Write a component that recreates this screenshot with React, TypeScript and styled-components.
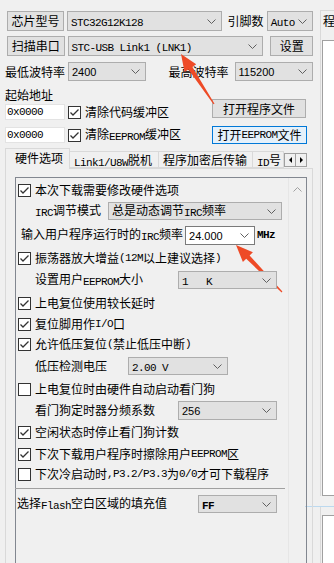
import React from 'react';
import styled, { createGlobalStyle } from 'styled-components';

const GlobalStyle = createGlobalStyle`
  html, body {
    margin: 0;
    padding: 0;
    background: #f0f0f0;
  }

  body {
    font-family: "Noto Sans CJK SC", "Liberation Sans", sans-serif;
    font-size: 12px;
    color: #000;
  }
`;

const $FACE = '#f0f0f0';
const $BTN = '#e1e1e1';
const $BTN_BORDER = '#adadad';
const $TAB_BORDER = '#d9d9d9';
const $BOX_BORDER = '#828790';
const $ARROW = '#ee4a26';

const Page = styled.div`
  position: relative;
  width: 334px;
  height: 563px;
  overflow: hidden;
  background: ${$FACE};
  display: flex;
  flex-direction: column;
`;

const MenuEdge = styled.div`
  height: 4px;
  background: #fff;
`;

const Body = styled.div`
  flex: 1;
  display: flex;
`;

const LeftCol = styled.div`
  width: 313px;
  display: flex;
  flex-direction: column;
`;

const Row = styled.div<{ $mt: number; $h: number; $pl?: number }>`
  display: flex;
  align-items: center;
  margin-top: ${p => p.$mt}px;
  height: ${p => p.$h}px;
  padding-left: ${p => p.$pl ?? 7}px;
  line-height: 14px;
  white-space: nowrap;
`;

// SimSun-like latin: 6px per glyph at 12px
const Lat = styled.span<{ $bold?: boolean }>`
  font-family: "Liberation Mono", monospace;
  font-size: 11px;
  letter-spacing: -0.6px;
  vertical-align: -1px;
  font-weight: ${p => (p.$bold ? 700 : 400)};
  white-space: pre;
`;

const Num = styled.span`
  font-family: "Liberation Sans", sans-serif;
  font-size: 11px;
`;

const mix = (text: string) =>
  text
    .split(/([\x20-\x7e]+)/)
    .filter(Boolean)
    .map((part, i) =>
      /^[\x20-\x7e]+$/.test(part) ? <Lat key={i}>{part}</Lat> : <React.Fragment key={i}>{part}</React.Fragment>
    );

const Button = styled.div<{ $w: number; $h?: number; $ml?: number; $mt?: number; $focus?: boolean }>`
  box-sizing: border-box;
  width: ${p => p.$w}px;
  height: ${p => p.$h ?? 20}px;
  margin-left: ${p => p.$ml ?? 0}px;
  margin-top: ${p => p.$mt ?? 0}px;
  display: flex;
  align-items: center;
  justify-content: center;
  background: ${p => (p.$focus ? '#e5f1fb' : $BTN)};
  border: 1px solid ${p => (p.$focus ? '#0078d7' : $BTN_BORDER)};
  line-height: 14px;
  white-space: nowrap;
`;

const SelectBox = styled.div<{ $w: number; $h?: number; $ml?: number; $white?: boolean }>`
  box-sizing: border-box;
  width: ${p => p.$w}px;
  height: ${p => p.$h ?? 20}px;
  margin-left: ${p => p.$ml ?? 0}px;
  padding: 0 5px 0 3px;
  display: flex;
  align-items: center;
  justify-content: space-between;
  background: ${p => (p.$white ? '#fff' : $BTN)};
  border: 1px solid ${p => (p.$white ? '#7a7a7a' : $BTN_BORDER)};
  line-height: 14px;
  white-space: nowrap;
  overflow: hidden;
`;

const Chevron = () => (
  <svg width="9" height="5" viewBox="0 0 9 5">
    <polyline points="0.5,0.5 4.5,4.5 8.5,0.5" fill="none" stroke="#606060" strokeWidth="1" />
  </svg>
);

const Select: React.FC<{ w: number; h?: number; ml?: number; white?: boolean; children: React.ReactNode }> = ({
  w,
  h,
  ml,
  white,
  children
}) => (
  <SelectBox $w={w} $h={h} $ml={ml} $white={white}>
    <span>{children}</span>
    <Chevron />
  </SelectBox>
);

const Label = styled.span<{ $w?: number; $ml?: number }>`
  display: inline-block;
  width: ${p => (p.$w ? `${p.$w}px` : 'auto')};
  margin-left: ${p => p.$ml ?? 0}px;
  flex-shrink: 0;
`;

const CheckBox = styled.span`
  box-sizing: border-box;
  width: 13px;
  height: 13px;
  flex-shrink: 0;
  background: #fff;
  border: 1px solid #333;
  display: flex;
  align-items: center;
  justify-content: center;
  margin-right: 4px;
`;

const Check: React.FC<{ on: boolean }> = ({ on }) => (
  <CheckBox>
    {on && (
      <svg width="11" height="11" viewBox="0 0 11 11">
        <polyline points="1.5,5.5 4,8 9.5,2.5" fill="none" stroke="#333" strokeWidth="1.3" />
      </svg>
    )}
  </CheckBox>
);

const TextInput = styled.div`
  box-sizing: border-box;
  width: 60px;
  height: 16px;
  background: #fff;
  border: 1px solid #e3e3e3;
  padding-left: 1px;
  display: flex;
  align-items: center;
  margin-right: 3px;
`;

const AddrBlock = styled.div`
  display: flex;
  margin-top: 5px;
`;

const AddrLeft = styled.div`
  width: 207px;
  padding-left: 5px;
  display: flex;
  flex-direction: column;
`;

const AddrTitle = styled.div`
  height: 18px;
  line-height: 18px;
`;

const AddrRight = styled.div`
  display: flex;
  flex-direction: column;
`;

const TabBar = styled.div`
  display: flex;
  align-items: flex-end;
  height: 20px;
  margin-top: 4px;
  padding-left: 5px;
  white-space: nowrap;
`;

const Tab = styled.div<{ $w: number; $active?: boolean }>`
  box-sizing: border-box;
  position: relative;
  z-index: ${p => (p.$active ? 2 : 1)};
  width: ${p => p.$w}px;
  height: ${p => (p.$active ? 21 : 17)}px;
  margin-left: -1px;
  margin-bottom: ${p => (p.$active ? -1 : 0)}px;
  padding-left: ${p => (p.$active ? 9 : 4)}px;
  padding-top: ${p => (p.$active ? 2 : 1)}px;
  background: ${$FACE};
  border: 1px solid ${$TAB_BORDER};
  border-bottom: ${p => (p.$active ? 'none' : `1px solid ${$TAB_BORDER}`)};
  line-height: 14px;
  overflow: hidden;
  &:first-child {
    margin-left: 0;
  }
`;

const Spin = styled.div`
  display: flex;
  align-self: center;
  margin-top: 4px;
`;

const SpinBtn = styled.div<{ $dir: 'left' | 'right' }>`
  box-sizing: border-box;
  width: 12px;
  height: 14px;
  background: ${$FACE};
  border: 1px solid #a0a0a0;
  margin-left: ${p => (p.$dir === 'right' ? -1 : 0)}px;
  display: flex;
  align-items: center;
  justify-content: center;
  &::after {
    content: '';
    border-top: 3px solid transparent;
    border-bottom: 3px solid transparent;
    ${p => (p.$dir === 'left' ? 'border-right: 3px solid #000;' : 'border-left: 3px solid #000;')}
  }
`;

const TabPanel = styled.div`
  position: relative;
  z-index: 1;
  flex: 1;
  margin-left: 5px;
  width: 308px;
  box-sizing: border-box;
  border: 1px solid ${$TAB_BORDER};
  border-bottom: none;
  padding: 8px 0 0 9px;
`;

const ListBox = styled.div`
  box-sizing: border-box;
  width: 292px;
  height: 420px;
  border: 1px solid ${$BOX_BORDER};
  border-bottom: none;
  display: flex;
`;

const ListContent = styled.div`
  flex: 1;
  padding-top: 2px;
  display: flex;
  flex-direction: column;
`;

const OptRow = styled.div<{ $h: number; $pl?: number }>`
  display: flex;
  align-items: center;
  height: ${p => p.$h}px;
  padding-left: ${p => p.$pl ?? 2}px;
  line-height: 14px;
  white-space: nowrap;
`;

const Separator = styled.div`
  height: 1px;
  margin: 4px 3px 0 -1px;
  background: #a0a0a0;
`;

const ScrollBar = styled.div`
  width: 18px;
  box-sizing: border-box;
  border-left: 1px solid #e6e6e6;
  display: flex;
  justify-content: center;
  padding-top: 9px;
`;

const Unit = styled(Lat)`
  font-weight: 700;
  margin-left: 2px;
`;

const RightCol = styled.div`
  flex: 1;
  display: flex;
  flex-direction: column;
  padding-top: 10px;
`;

const RightTab = styled.div`
  height: 21px;
  margin-left: 7px;
  padding-left: 2px;
  border-left: 1px solid ${$TAB_BORDER};
  border-top: 1px solid ${$TAB_BORDER};
  line-height: 20px;
  white-space: nowrap;
  overflow: hidden;
`;

const RightPanel = styled.div`
  margin-left: 7px;
  padding: 8px 0 0 1px;
  border-left: 1px solid ${$TAB_BORDER};
`;

const WhiteBox = styled.div<{ $h: number }>`
  height: ${p => p.$h}px;
  background: #fff;
  border: 1px solid #a0a0a0;
  border-right: none;
`;

const BlueLine = styled.div`
  height: 1px;
  margin: 10px 0 0 -8px;
  background: #bcd9ef;
`;

const Overlay = styled.svg`
  position: absolute;
  left: 0;
  top: 0;
  pointer-events: none;
`;

const arrowPoints = (tx: number, ty: number, fx: number, fy: number) => {
  const dx = tx - fx;
  const dy = ty - fy;
  const len = Math.hypot(dx, dy);
  const ux = dx / len;
  const uy = dy / len;
  const px = -uy;
  const py = ux;
  const hl = 17;
  const hw = 7;
  const sw = 2.4;
  const tw = 0.6;
  const bx = tx - ux * hl;
  const by = ty - uy * hl;
  return [
    [fx + px * tw, fy + py * tw],
    [bx + px * sw, by + py * sw],
    [bx + px * hw, by + py * hw],
    [tx, ty],
    [bx - px * hw, by - py * hw],
    [bx - px * sw, by - py * sw],
    [fx - px * tw, fy - py * tw]
  ]
    .map(pt => pt.map(v => v.toFixed(1)).join(','))
    .join(' ');
};

const App: React.FC = () => (
  <Page>
    <GlobalStyle />
    <MenuEdge />
    <Body>
      <LeftCol>
        <Row $mt={11} $h={20}>
          <Button $w={58}>芯片型号</Button>
          <Select w={157} ml={3}><Lat>STC32G12K128</Lat></Select>
          <Label $ml={6}>引脚数</Label>
          <Select w={47} ml={3}><Lat>Auto</Lat></Select>
        </Row>
        <Row $mt={5} $h={20}>
          <Button $w={58}>扫描串口</Button>
          <Select w={197} ml={3}><Lat>STC-USB Link1 (LNK1)</Lat></Select>
          <Button $w={43} $ml={7}>设置</Button>
        </Row>
        <Row $mt={6} $h={19} $pl={5}>
          <Label $w={63}>最低波特率</Label>
          <Select w={79} h={19}><Num>2400</Num></Select>
          <Label $w={66} $ml={23}>最高波特率</Label>
          <Select w={80} h={19}><Num>115200</Num></Select>
        </Row>
        <AddrBlock>
          <AddrLeft>
            <AddrTitle>起始地址</AddrTitle>
            <Row $mt={0} $h={16} $pl={0}>
              <TextInput><Lat>0x0000</Lat></TextInput>
              <Check on />
              <span>清除代码缓冲区</span>
            </Row>
            <Row $mt={7} $h={16} $pl={0}>
              <TextInput><Lat>0x0000</Lat></TextInput>
              <Check on />
              <span>{mix('清除EEPROM缓冲区')}</span>
            </Row>
          </AddrLeft>
          <AddrRight>
            <Button $w={94} $h={19} $mt={13}>打开程序文件</Button>
            <Button $w={95} $h={18} $mt={8} $focus>{mix('打开EEPROM文件')}</Button>
          </AddrRight>
        </AddrBlock>
        <TabBar>
          <Tab $w={65} $active>硬件选项</Tab>
          <Tab $w={90}>{mix('Link1/U8W脱机')}</Tab>
          <Tab $w={95}>程序加密后传输</Tab>
          <Tab $w={32}>{mix('ID号')}</Tab>
          <Spin>
            <SpinBtn $dir="left" />
            <SpinBtn $dir="right" />
          </Spin>
        </TabBar>
        <TabPanel>
          <ListBox>
            <ListContent>
              <OptRow $h={20}>
                <Check on />本次下载需要修改硬件选项
              </OptRow>
              <OptRow $h={22} $pl={19}>
                <Label $w={73}>{mix('IRC调节模式')}</Label>
                <Select w={174} h={18}>{mix('总是动态调节IRC频率')}</Select>
              </OptRow>
              <OptRow $h={26} $pl={5}>
                <Label>{mix('输入用户程序运行时的IRC频率')}</Label>
                <Select w={70} h={19} ml={2} white><Num>24.000</Num></Select>
                <Unit>MHz</Unit>
              </OptRow>
              <OptRow $h={20}>
                <Check on />{mix('振荡器放大增益(12M以上建议选择)')}
              </OptRow>
              <OptRow $h={24} $pl={19}>
                <Label $w={143}>{mix('设置用户EEPROM大小')}</Label>
                <Select w={99} h={18}><Lat>{'1   K'}</Lat></Select>
              </OptRow>
              <OptRow $h={22}>
                <Check on />上电复位使用较长延时
              </OptRow>
              <OptRow $h={20}>
                <Check on />{mix('复位脚用作I/O口')}
              </OptRow>
              <OptRow $h={20}>
                <Check on />{mix('允许低压复位(禁止低压中断)')}
              </OptRow>
              <OptRow $h={24} $pl={19}>
                <Label $w={93}>低压检测电压</Label>
                <Select w={100} h={18}><Lat>2.00 V</Lat></Select>
              </OptRow>
              <OptRow $h={22}>
                <Check on={false} />上电复位时由硬件自动启动看门狗
              </OptRow>
              <OptRow $h={20} $pl={19}>
                <Label $w={143}>看门狗定时器分频系数</Label>
                <Select w={99} h={19}><Num>256</Num></Select>
              </OptRow>
              <OptRow $h={24}>
                <Check on />空闲状态时停止看门狗计数
              </OptRow>
              <OptRow $h={20}>
                <Check on />{mix('下次下载用户程序时擦除用户EEPROM区')}
              </OptRow>
              <OptRow $h={20}>
                <Check on={false} />{mix('下次冷启动时,P3.2/P3.3为0/0才可下载程序')}
              </OptRow>
              <Separator />
              <OptRow $h={30} $pl={1}>
                <Label $w={181}>{mix('选择Flash空白区域的填充值')}</Label>
                <Select w={79} h={18}><Lat $bold>FF</Lat></Select>
              </OptRow>
            </ListContent>
            <ScrollBar>
              <svg width="9" height="5" viewBox="0 0 9 5">
                <polyline points="0.5,4.5 4.5,0.5 8.5,4.5" fill="none" stroke="#a0a0a0" strokeWidth="1" />
              </svg>
            </ScrollBar>
          </ListBox>
        </TabPanel>
      </LeftCol>
      <RightCol>
        <RightTab>程</RightTab>
        <RightPanel>
          <WhiteBox $h={454} />
        </RightPanel>
        <BlueLine />
        <RightPanel>
          <WhiteBox $h={80} />
        </RightPanel>
      </RightCol>
    </Body>
    <Overlay width="334" height="563" viewBox="0 0 334 563">
      <polygon points={arrowPoints(181, 54, 214, 104)} fill={$ARROW} />
      <polygon points={arrowPoints(236, 245, 282, 292)} fill={$ARROW} />
    </Overlay>
  </Page>
);

export default App;
